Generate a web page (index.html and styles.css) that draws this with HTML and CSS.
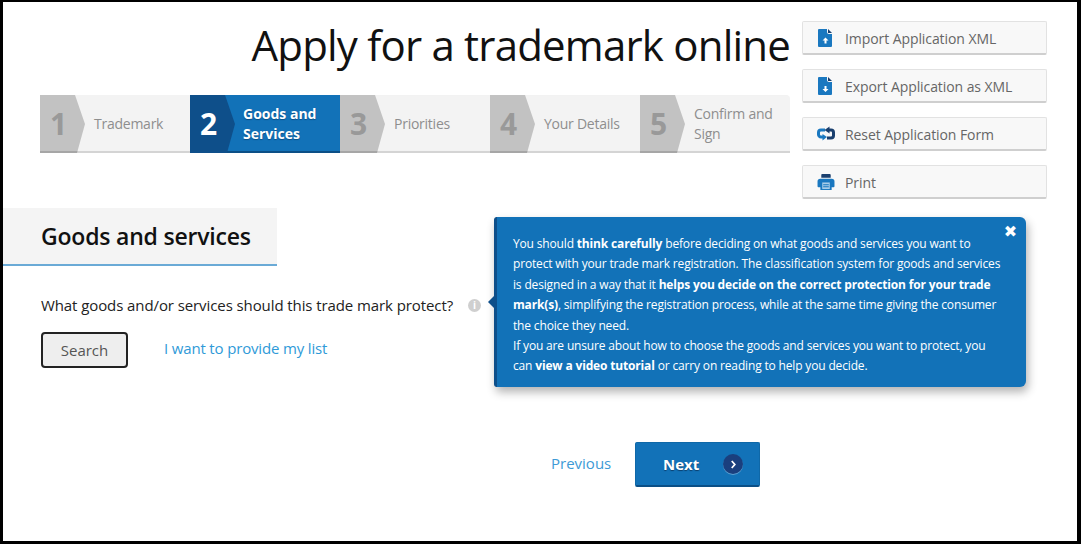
FILE: index.html
```html
<!DOCTYPE html>
<html lang="en">
<head>
    <meta charset="UTF-8">
    <title>Apply for a trademark online</title>
    <link rel="stylesheet" href="styles.css">
</head>
<body>
    <div class="frame">
        <div class="top-row">
            <div class="top-main">
                <h1>Apply for a trademark online</h1>
                <div class="steps">
                    <div class="step"><span class="step-num">1</span><span class="step-label">Trademark</span></div>
                    <div class="step active"><span class="step-num">2</span><span class="step-label">Goods and Services</span></div>
                    <div class="step"><span class="step-num">3</span><span class="step-label">Priorities</span></div>
                    <div class="step"><span class="step-num">4</span><span class="step-label">Your Details</span></div>
                    <div class="step"><span class="step-num">5</span><span class="step-label">Confirm and Sign</span></div>
                </div>
            </div>
            <div class="side-actions">
                <a class="side-btn">
                    <svg class="side-icon" viewBox="0 0 14 18"><path fill="#1a78c0" d="M1 0h8v3a2 2 0 0 0 2 2h3v12a1 1 0 0 1-1 1H1a1 1 0 0 1-1-1V1a1 1 0 0 1 1-1z"/><path fill="#1a3f6e" d="M10 0l4 4h-4z"/><path fill="#fff" d="M7.500 8.500l3 3h-2v3h-2v-3h-2z"/></svg>
                    <span class="side-text">Import Application XML</span>
                </a>
                <a class="side-btn">
                    <svg class="side-icon" viewBox="0 0 14 18"><path fill="#1a78c0" d="M1 0h8v3a2 2 0 0 0 2 2h3v12a1 1 0 0 1-1 1H1a1 1 0 0 1-1-1V1a1 1 0 0 1 1-1z"/><path fill="#1a3f6e" d="M10 0l4 4h-4z"/><path fill="#fff" d="M7.500 15l-3-3h2V9h2v3h2z"/></svg>
                    <span class="side-text">Export Application as XML</span>
                </a>
                <a class="side-btn">
                    <svg class="side-icon wide" viewBox="0 0 18 15"><path fill="none" stroke="#1a78c0" stroke-width="3" d="M8 3.500H4a2.500 2.500 0 0 0-2.500 2.500v2A2.500 2.500 0 0 0 4 10.500h2"/><path fill="#1a78c0" d="M5.500 7.500l4.500 3-4.500 3.500z"/><path fill="none" stroke="#1a3f6e" stroke-width="3" d="M10 11.500h4a2.500 2.500 0 0 0 2.500-2.500V6A2.500 2.500 0 0 0 14 3.500h-2"/><path fill="#1a3f6e" d="M12.500 0l-5 3.500 5 3.500z"/></svg>
                    <span class="side-text">Reset Application Form</span>
                </a>
                <a class="side-btn">
                    <svg class="side-icon wide" viewBox="0 0 18 17"><path fill="#1a3f6e" d="M4 1a1 1 0 0 1 1-1h8a1 1 0 0 1 1 1v3H4z"/><path fill="#1a78c0" d="M3 5h12a3 3 0 0 1 3 3v5a1 1 0 0 1-1 1h-2v3H3v-3H1a1 1 0 0 1-1-1V8a3 3 0 0 1 3-3z"/><path fill="#a9cde8" d="M5 9h8v7H5z"/><path fill="#1a78c0" d="M6 11h6v1H6zM6 13h6v1H6z"/></svg>
                    <span class="side-text">Print</span>
                </a>
            </div>
        </div>

        <div class="section-head">
            <h2>Goods and services</h2>
        </div>

        <div class="content">
            <div class="question">
                What goods and/or services should this trade mark protect?
                <span class="info-dot">i</span>
            </div>
            <div class="search-row">
                <button class="search-btn">Search</button>
                <a class="list-link">I want to provide my list</a>
            </div>
            <div class="pager">
                <a class="prev-link">Previous</a>
                <button class="next-btn">Next <span class="next-arrow"><svg viewBox="0 0 8 10" width="7" height="9"><path fill="none" stroke="#fff" stroke-width="2" d="M2 1l3.500 4L2 9"/></svg></span></button>
            </div>

            <!-- help tooltip, sits over the content -->
            <div class="tooltip">
                <span class="tooltip-close">&#10006;</span>
                You should <b>think carefully</b> before deciding on what goods and services you want to protect with your trade mark registration. The classification system for goods and services is designed in a way that it <b>helps you decide on the correct protection for your trade mark(s)</b>, simplifying the registration process, while at the same time giving the consumer the choice they need.<br>
                If you are unsure about how to choose the goods and services you want to protect, you can <b>view a video tutorial</b> or carry on reading to help you decide.
            </div>
        </div>
    </div>
</body>
</html>
```

FILE: styles.css
```css
* {
    box-sizing: border-box;
}

html, body {
    margin: 0;
    padding: 0;
}

body {
    font-family: "Open Sans", sans-serif;
    background-color: white;
    color: #222;
}

.frame {
    position: relative;
    width: 1081px;
    height: 544px;
    border-style: solid;
    border-color: black;
    border-width: 2px 4px 3px 3px;
    overflow: hidden;
}

.top-row {
    display: flex;
    align-items: flex-start;
    padding-left: 37px;
}

.top-main {
    width: 750px;
}

h1 {
    margin: 0;
    padding-top: 15px;
    height: 93px;
    font-size: 42px;
    line-height: 56px;
    font-weight: 400;
    letter-spacing: -0.8px;
    color: #111;
    text-align: right;
    white-space: nowrap;
}

.steps {
    display: flex;
    height: 58px;
    border-radius: 0 4px 0 0;
    overflow: hidden;
}

.step {
    position: relative;
    display: flex;
    align-items: center;
    width: 150px;
    background-color: #f3f3f3;
    border-bottom: 2px solid #d4d4d4;
    color: #8e8e8e;
    font-size: 14px;
    line-height: 20px;
}

.step-num {
    flex: none;
    width: 45px;
    height: 58px;
    margin-bottom: -2px;
    padding-right: 8px;
    background: linear-gradient(#c2c2c2 56px, #a6a6a6 56px);
    clip-path: polygon(0 0, 35px 0, 45px 50%, 37px 100%, 0 100%);
    color: #999;
    font-size: 30px;
    font-weight: 700;
    line-height: 58px;
    text-align: center;
}

.step-label {
    padding-top: 2px;
    padding-left: 9px;
    letter-spacing: -0.25px;
}

.step:nth-child(3),
.step:nth-child(4),
.step:nth-child(5) {
    box-shadow: inset 3px 0 3px -2px #ddd;
}

.step.active {
    background-color: #1272b8;
    border-bottom-color: #0b4f86;
    color: white;
    font-weight: 700;
    text-shadow: 0 1px 1px #0b4f86;
}

.step.active .step-num {
    background: #0e4f8a;
    color: white;
    text-shadow: none;
}

.step.active .step-label {
    padding-left: 8px;
    letter-spacing: 0;
}

.side-actions {
    display: flex;
    flex-direction: column;
    gap: 14px;
    width: 245px;
    margin-top: 19px;
    margin-left: 12px;
}

.side-btn {
    display: flex;
    align-items: center;
    height: 34px;
    background-color: #f8f8f8;
    border: 1px solid #e2e2e2;
    border-bottom: 2px solid #cfcfcf;
    border-radius: 2px;
    color: #666;
    font-size: 14px;
    white-space: nowrap;
}

.side-text {
    padding-top: 2px;
    letter-spacing: -0.08px;
}

.side-icon {
    width: 14px;
    height: 18px;
    margin-left: 15px;
    margin-right: 13px;
}

.side-icon.wide {
    width: 18px;
    height: 16px;
    margin-left: 14px;
    margin-right: 10px;
}

.section-head {
    width: 274px;
    height: 58px;
    margin-top: 9px;
    padding-left: 38px;
    background-color: #f4f4f4;
    border-bottom: 2px solid #6aaad6;
}

h2 {
    margin: 0;
    font-size: 23px;
    font-weight: 600;
    letter-spacing: -0.2px;
    line-height: 57px;
    color: #111;
}

.content {
    padding-left: 38px;
}

.question {
    display: flex;
    align-items: center;
    margin-top: 28px;
    font-size: 15px;
    letter-spacing: -0.09px;
    line-height: 22px;
    color: #222;
}

.info-dot {
    width: 13px;
    height: 13px;
    margin-left: 15px;
    border-radius: 50%;
    background-color: #cfcfcf;
    color: white;
    font-size: 10px;
    font-weight: 700;
    line-height: 13px;
    text-align: center;
}

.search-row {
    display: flex;
    align-items: center;
    margin-top: 16px;
}

.search-btn {
    width: 87px;
    height: 36px;
    padding: 0;
    background-color: #eee;
    border: 2px solid #222;
    border-radius: 4px;
    color: #555;
    font-family: inherit;
    font-size: 15px;
}

.list-link {
    margin-left: 36px;
    padding-bottom: 4px;
    color: #2f9ad8;
    font-size: 15px;
    letter-spacing: -0.16px;
}

.pager {
    display: flex;
    align-items: center;
    margin-top: 74px;
    padding-left: 510px;
}

.prev-link {
    width: 84px;
    padding-bottom: 4px;
    color: #3d9ad6;
    font-size: 15px;
}

.next-btn {
    display: flex;
    align-items: center;
    width: 125px;
    height: 45px;
    padding: 0 0 0 27px;
    background-color: #1272b8;
    border: 1px solid #0f68a8;
    border-bottom: 2px solid #0b4f86;
    border-radius: 2px;
    color: white;
    font-family: inherit;
    font-size: 15px;
    font-weight: 700;
    text-shadow: 0 1px 1px #0b3f6e;
}

.next-arrow {
    display: flex;
    align-items: center;
    justify-content: center;
    width: 20px;
    height: 20px;
    margin-left: 24px;
    border-radius: 50%;
    background-color: #1a3f7e;
    box-shadow: 0 1px 0 #5b9fd0;
}

.tooltip {
    position: absolute;
    left: 491px;
    top: 215px;
    width: 532px;
    height: 170px;
    padding: 17px 24px 0 16px;
    background-color: #1272b8;
    border-left: 3px solid #0e4f8a;
    border-radius: 3px 6px 6px 3px;
    box-shadow: 2px 5px 10px rgba(0, 0, 0, 0.3);
    color: white;
    font-size: 12px;
    letter-spacing: -0.16px;
    line-height: 20.400px;
}

.tooltip::before {
    content: "";
    position: absolute;
    left: -9px;
    top: 79px;
    border-style: solid;
    border-width: 6px 6px 6px 0;
    border-color: transparent #0e4f8a transparent transparent;
}

.tooltip-close {
    position: absolute;
    right: 9px;
    top: 5px;
    font-family: "DejaVu Sans", sans-serif;
    font-size: 16px;
    font-weight: 700;
}
```
